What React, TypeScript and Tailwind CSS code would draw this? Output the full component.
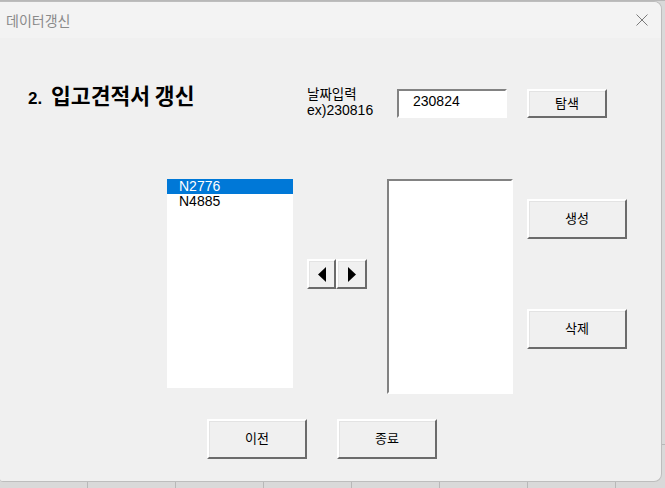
import React from "react";

const raised =
  "flex items-center justify-center bg-[#f0f0f0] border-2 border-t-white border-l-white border-r-[#6b6b6b] border-b-[#6b6b6b] shadow-[inset_1px_1px_0_#e3e3e3] text-[13px] text-black";
const sunken =
  "bg-white border-2 border-t-[#828282] border-l-[#828282] border-r-white border-b-white";

const items = ["N2776", "N4885"];

function FormButton({ label, className }: { label: string; className: string }) {
  return <button className={`${raised} ${className}`}>{label}</button>;
}

export default function App() {
  return (
    <div
      className="relative w-[665px] h-[488px] overflow-hidden bg-[#d9d9d9] pt-px"
      style={{ fontFamily: '"Liberation Sans", "Noto Sans CJK KR", sans-serif' }}
    >
      {/* spreadsheet grid behind the dialog */}
      <div className="absolute inset-0 flex">
        {Array.from({ length: 8 }).map((_, i) => (
          <div key={i} className="w-[88px] h-full shrink-0 border-r border-[#b8b8b8]" />
        ))}
      </div>
      <div className="absolute left-0 right-0 top-0 h-px bg-[#b8b8b8]" />
      <div className="absolute left-0 right-0 top-[444px] h-px bg-[#b8b8b8]" />

      {/* dialog window */}
      <div className="relative w-[662px] h-[481px] bg-[#f0f0f0] border-r border-b border-t border-[#bdbdbd] rounded-tr-[8px] rounded-br-[8px] rounded-bl-[3px] overflow-hidden">
        {/* title bar */}
        <div className="h-[36px] flex items-center justify-between pl-[6px] pr-[13px] bg-[#f3f3f3]">
          <span className="text-[14px] text-[#8a8a8a]" style={{ fontFamily: '"Noto Sans CJK KR", sans-serif' }}>
            데이터갱신
          </span>
          <svg width="12" height="12" viewBox="0 0 12 12" className="text-[#7a7a7a]">
            <path d="M0.5 0.5 L11.5 11.5 M11.5 0.5 L0.5 11.5" stroke="currentColor" strokeWidth="1" />
          </svg>
        </div>

        {/* row 1: heading, date input, search */}
        <div className="flex items-start pl-[28px] pt-[51px] h-[80px]">
          <div
            className="w-[279px] h-[26px] leading-[26px] -mt-[7px] font-bold text-[21.5px] text-black whitespace-nowrap"
            style={{ fontFamily: '"Noto Sans CJK KR", sans-serif' }}
          >
            <span className="text-[17px] mr-[4px]" style={{ fontFamily: '"Liberation Sans", sans-serif' }}>2.</span> 입고견적서 갱신
          </div>
          <div className="w-[90px] -mt-[4px] text-[14px] leading-[17px] text-black">
            <div className="h-[17px] text-[13.5px]" style={{ fontFamily: '"Noto Sans CJK KR", sans-serif' }}>날짜입력</div>
            <div className="h-[17px]">ex)230816</div>
          </div>
          <div className={`${sunken} w-[110px] h-[29px] pl-[14px] pt-[1px] text-[14px] leading-[18px] text-black`}>
            230824
          </div>
          <FormButton label="탐색" className="ml-[20px] w-[80px] h-[29px]" />
        </div>

        {/* row 2: lists and actions */}
        <div className="flex items-start mt-[61px]">
          <div className="ml-[167px] w-[126px] h-[209px] bg-white">
            {items.map((it, i) => (
              <div
                key={it}
                className={
                  i === 0
                    ? "h-[15px] leading-[15px] pl-[12px] text-[14px] bg-[#0078d7] text-white"
                    : "h-[15px] leading-[15px] pl-[12px] text-[14px] text-black"
                }
              >
                {it}
              </div>
            ))}
          </div>

          <div className="ml-[14px] mt-[80px] flex">
            <button className={`${raised} w-[29px] h-[30px]`}>
              <svg width="8" height="15" viewBox="0 0 8 15">
                <path d="M8 0 L0 7.5 L8 15 Z" fill="#000" />
              </svg>
            </button>
            <button className={`${raised} w-[31px] h-[30px]`}>
              <svg width="8" height="15" viewBox="0 0 8 15">
                <path d="M0 0 L8 7.5 L0 15 Z" fill="#000" />
              </svg>
            </button>
          </div>

          <div className={`${sunken} ml-[20px] w-[126px] h-[215px]`} />

          <div className="ml-[14px] flex flex-col">
            <FormButton label="생성" className="mt-[20px] w-[100px] h-[40px]" />
            <FormButton label="삭제" className="mt-[70px] w-[100px] h-[40px]" />
          </div>
        </div>

        {/* row 3: navigation */}
        <div className="flex pl-[207px] mt-[25px]">
          <FormButton label="이전" className="w-[100px] h-[40px]" />
          <FormButton label="종료" className="ml-[30px] w-[100px] h-[40px]" />
        </div>
      </div>
    </div>
  );
}
